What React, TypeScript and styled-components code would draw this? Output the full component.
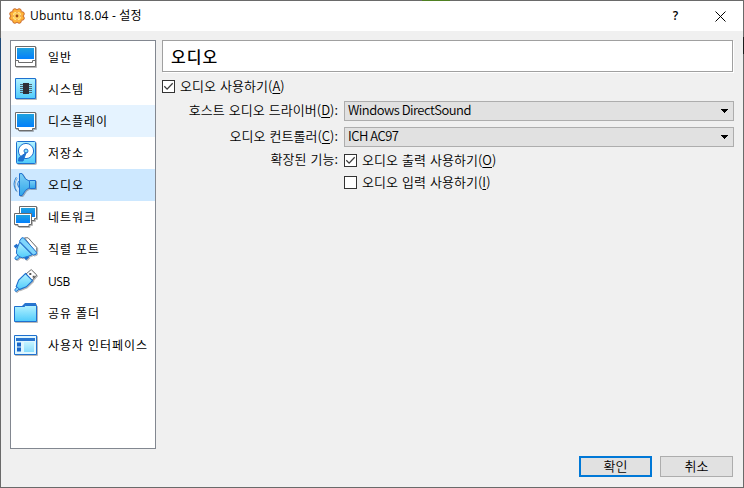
import React from "react";
import styled, { createGlobalStyle } from "styled-components";

const GlobalStyle = createGlobalStyle`
  * { box-sizing: border-box; }
  body { margin: 0; background: #f0f0f0; overflow: hidden; }
`;

const uiFont = `"Open Sans", "Noto Sans CJK KR", sans-serif`;
const formFont = `"Noto Sans CJK KR", sans-serif`;

const Frame = styled.div`
  width: 744px;
  height: 488px;
  padding: 1px;
  background:
    linear-gradient(#4f8022, #4f8022) 422px 0 / 28px 1px no-repeat,
    linear-gradient(#1f4a78, #1f4a78) 0 38px / 1px 52px no-repeat,
    linear-gradient(#1c1c1c, #1c1c1c) 743px 37px / 1px 17px no-repeat,
    #6a6a6a;
  color: #000;
  font-size: 13px;
`;

const Window = styled.div`
  width: 742px;
  height: 486px;
  display: flex;
  flex-direction: column;
  background: #f0f0f0;
`;

const TitleBar = styled.header`
  height: 30px;
  flex: none;
  display: flex;
  align-items: center;
  padding-left: 8px;
  background: #fff;
`;

const TitleText = styled.span`
  flex: 1;
  margin-left: 5px;
  font: 12px/28px ${uiFont};
  letter-spacing: 0.2px;
`;

const TitleButton = styled.button`
  width: 45px;
  height: 29px;
  padding: 0;
  border: 0;
  background: none;
  display: flex;
  align-items: center;
  justify-content: center;
  font: 600 12px/28px "Open Sans", sans-serif;
  color: #000;
`;

const Body = styled.div`
  height: 409px;
  margin: 9px 9px 0 9px;
  display: flex;
  gap: 6px;
`;

const Sidebar = styled.nav`
  width: 146px;
  flex: none;
  background: #fff;
  border: 1px solid #828790;
`;

const NavItem = styled.div<{ $state?: "hover" | "selected" }>`
  height: 32px;
  padding-left: 3px;
  display: flex;
  align-items: center;
  gap: 10px;
  background: ${(p) =>
    p.$state === "selected" ? "#cde8ff" : p.$state === "hover" ? "#e5f3ff" : "transparent"};
`;

const NavLabel = styled.span<{ $spacing?: number }>`
  padding-top: 2px;
  font: 12px/30px ${uiFont};
  letter-spacing: ${(p) => p.$spacing ?? 0.95}px;
  white-space: nowrap;
`;

const Page = styled.main`
  width: 572px;
  display: flex;
  flex-direction: column;
`;

const PageTitle = styled.h1`
  height: 32px;
  width: 571px;
  margin: 0;
  padding-left: 8px;
  border: 1px solid #a0a0a0;
  box-shadow: 1px 1px 0 #fff;
  background: #fff;
  font: 500 16px/30px "Noto Sans CJK KR", sans-serif;
  letter-spacing: 1px;
`;

const EnableRow = styled.div`
  height: 13px;
  margin-top: 8px;
`;

const CheckLabel = styled.label`
  height: 13px;
  display: flex;
  align-items: center;
  gap: 5px;
`;

const Box = styled.span`
  width: 13px;
  height: 13px;
  flex: none;
  display: flex;
  background: #fff;
  border: 1px solid #333;
`;

const Caption = styled.span<{ $latin?: boolean }>`
  padding-bottom: 2px;
  font: 350 13px/18px ${formFont};
  letter-spacing: ${(p) => (p.$latin ? -0.5 : 0.05)}px;
  word-spacing: ${(p) => (p.$latin ? 0 : 1)}px;
  white-space: nowrap;
`;

const Key = styled.span`
  text-decoration: underline;
  text-decoration-thickness: 1px;
  text-underline-offset: 2px;
`;

const Form = styled.div`
  margin-top: 8px;
  display: grid;
  grid-template-columns: 176px 390px;
  grid-template-rows: 20px 20px 13px 13px;
  row-gap: 6px;
  column-gap: 6px;
`;

const FieldLabel = styled.div`
  display: flex;
  align-items: center;
  justify-content: flex-end;
`;

const CheckCell = styled.div<{ $offset: number }>`
  grid-column: 2;
  padding-top: ${(p) => p.$offset}px;
`;

const Combo = styled.div`
  height: 20px;
  padding: 0 4px 0 3px;
  border: 1px solid #adadad;
  background: #e1e1e1;
  display: flex;
  align-items: center;
  justify-content: space-between;
`;

const Footer = styled.footer`
  display: flex;
  justify-content: flex-end;
  gap: 8px;
  padding: 7px 10px 0 0;
`;

const PushButton = styled.button<{ $primary?: boolean }>`
  width: 73px;
  height: 21px;
  padding: 0;
  background: #e1e1e1;
  border: ${(p) => (p.$primary ? "2px solid #0078d7" : "1px solid #adadad")};
  color: #000;
  display: flex;
  align-items: center;
  justify-content: center;
`;

const HiddenDefs = styled.svg`
  display: block;
`;

const BLUE = "#1e70cf";

function IconDefs() {
  return (
    <HiddenDefs width="0" height="0">
      <defs>
        <linearGradient id="screen" x1="0" y1="0" x2="0" y2="1">
          <stop offset="0" stopColor="#1fa2e0" />
          <stop offset="1" stopColor="#0480fb" />
        </linearGradient>
        <linearGradient id="sky" x1="0" y1="0" x2="0" y2="1">
          <stop offset="0" stopColor="#b4f2ff" />
          <stop offset="1" stopColor="#4fcbfb" />
        </linearGradient>
        <linearGradient id="cone" x1="0" y1="0" x2="0" y2="1">
          <stop offset="0" stopColor="#7fd0f6" />
          <stop offset="1" stopColor="#2fa6ea" />
        </linearGradient>
      </defs>
    </HiddenDefs>
  );
}

const IconSvg = styled.svg`
  width: 24px;
  height: 24px;
  flex: none;
  display: block;
  overflow: visible;
  filter: drop-shadow(1px 1px 0 rgba(0, 0, 0, 0.28));
`;

const icons: Record<string, React.ReactNode> = {
  general: (
    <>
      <path d="M1.5 1.5h20v20h-20z" fill="#fff" stroke="#6c6c6c" />
      <path d="M3 3h17v11h-17z" fill="url(#screen)" />
      <path d="M1.5 15.5h3v2h14v-2h3" fill="none" stroke="#6c6c6c" />
    </>
  ),
  system: (
    <>
      <path d="M1.5 1.5h20v20h-20z" fill="url(#sky)" stroke={BLUE} />
      <path d="M6 7.5h12M6 9.5h12M6 11.5h12M6 13.5h12M6 15.5h12" stroke="#4d6674" />
      <path d="M9 6h6v11h-6z" fill="#2e2e36" />
    </>
  ),
  display: (
    <>
      <path d="M1.5 3.5h20v16h-3v2h-14v-2h-3z" fill="#fff" stroke="#6c6c6c" />
      <path d="M3 5h17v13h-17z" fill="url(#screen)" />
    </>
  ),
  storage: (
    <>
      <rect x="2.5" y=".5" width="19" height="22" rx="1" fill="url(#sky)" stroke={BLUE} />
      <circle cx="12" cy="10" r="7.6" fill="#fff" stroke={BLUE} />
      <circle cx="12" cy="10" r="2" fill="#8de0fb" stroke={BLUE} />
      <path d="M12.2 11.5L9 20H4.5l.5-3.2z" fill={BLUE} stroke={BLUE} strokeLinejoin="round" />
    </>
  ),
  audio: (
    <>
      <path d="M2.3 4.2Q-2.3 11 2.3 18.2M4.8 8Q2.3 11 4.8 14.6" fill="none" stroke="#2c86d8" />
      <path d="M15.5 7.5h6v8h-6z" fill="url(#cone)" stroke={BLUE} />
      <path d="M5.5.6h2.6l3.4 5.3 4 2.3v6.4l-4 2.7-3.4 5.2H5.5z" fill="url(#cone)" stroke={BLUE} />
    </>
  ),
  network: (
    <>
      <path d="M5.5 1.5h17v12h-2v2h-15z" fill="#fff" stroke="#6c6c6c" />
      <path d="M7 3h14v9h-14z" fill="url(#screen)" />
      <path d="M.5 8.5h17v11h-2.5v2h-11v-2H.5z" fill="#fff" stroke="#6c6c6c" />
      <path d="M2 10h14v8h-14z" fill="url(#screen)" />
    </>
  ),
  serial: (
    <>
      <path d="M10.5.8h3.6l8.6 9.6v3.2l-1.2 1.6z" fill="#fff" stroke="#777" />
      <path d="M.6 10.2l3-2.4M11 22l3.2-2.6" stroke={BLUE} strokeWidth="3" />
      <path d="M4.6 17.2L.8 20.8l.8 1.7 1.8-.3 3.2-3" fill="#83dcff" stroke={BLUE} />
      <path d="M5.6 5.2L18 17.8l-4.4 1.7-5 1.3-3.6-1.1-2.6-3.4.3-3.8z" fill="url(#sky)" stroke={BLUE} />
      <path d="M7.8.8h1.7l13 14.4-.4 2-2.8.9L5.4 4.2z" fill="#7fd6fc" stroke={BLUE} />
    </>
  ),
  usb: (
    <>
      <path d="M12 5L17.2.6 22.7 6 18 11.4z" fill="#fff" stroke="#6c6c6c" />
      <path d="M15.3 4h2v2h-2zM18.7 6.8h2v2h-2z" fill="#555" />
      <path d="M11.5 4.5l7 7.2-6.2 6.1-6.8 2.8L2.2 17.5 4.7 11z" fill="url(#sky)" stroke={BLUE} strokeWidth="1.1" />
      <path d="M2.7 18.4L.7 21l1.2 1.7 3.2-2.5" fill="#7fd7fb" stroke={BLUE} />
    </>
  ),
  folder: (
    <>
      <path d="M8 5l3-3h11v5H8z" fill="#2875cf" />
      <path d="M.5 5.5h10l1-1h11v16H.5z" fill="url(#sky)" stroke={BLUE} />
    </>
  ),
  interface: (
    <>
      <path d="M.5 2.5h22v19H.5z" fill="#dff7ff" stroke={BLUE} />
      <path d="M2 5h19v3H2z" fill="#2875cf" />
      <path d="M3 9.5h4v4H3zM3 14.5h4v4H3z" fill="#1765c8" />
      <path d="M10 9h10v10H10z" fill="url(#sky)" opacity=".6" />
    </>
  ),
};

const TEETH = [22.5, 67.5, 112.5, 157.5, 202.5, 247.5, 292.5, 337.5].map((deg) => ({
  cx: 8 + 5.6 * Math.cos((deg * Math.PI) / 180),
  cy: 8 + 5.6 * Math.sin((deg * Math.PI) / 180),
}));

function GearIcon() {
  return (
    <svg width="16" height="16" viewBox="0 0 16 16">
      {TEETH.map((t, i) => (
        <circle key={i} {...t} r="2.1" fill="#ffb43a" stroke="#c25a1c" strokeWidth=".9" />
      ))}
      <circle cx="8" cy="8" r="5.9" fill="#ffb43a" />
      <circle cx="8" cy="8" r="4" fill="#ffcf5c" stroke="#ffe79c" strokeWidth=".8" />
      <path d="M8 3.6v1.2M8 11.2v1.2M3.6 8h1.2M11.2 8h1.2" stroke="#d9731e" />
      <circle cx="8" cy="8" r="1.4" fill="#9c4414" />
    </svg>
  );
}

const CheckMark = () => (
  <svg width="11" height="11" viewBox="0 0 11 11">
    <path d="M1.3 5.3l2.8 2.8 5.6-5.8" fill="none" stroke="#3c3c3c" strokeWidth="1.3" />
  </svg>
);

const Arrow = () => (
  <svg width="9" height="4" viewBox="0 0 9 4">
    <path d="M1 0h7v1H1zM2 1h5v1H2zM3 2h3v1H3zM4 3h1v1H4z" fill="#000" shapeRendering="crispEdges" />
  </svg>
);

const navItems: { icon: string; label: string; state?: "hover" | "selected"; spacing?: number }[] = [
  { icon: "general", label: "일반" },
  { icon: "system", label: "시스템" },
  { icon: "display", label: "디스플레이", state: "hover" },
  { icon: "storage", label: "저장소" },
  { icon: "audio", label: "오디오", state: "selected" },
  { icon: "network", label: "네트워크" },
  { icon: "serial", label: "직렬 포트" },
  { icon: "usb", label: "USB", spacing: -0.4 },
  { icon: "folder", label: "공유 폴더" },
  { icon: "interface", label: "사용자 인터페이스" },
];

function Check({ text, k, checked }: { text: string; k: string; checked?: boolean }) {
  return (
    <CheckLabel>
      <Box>{checked && <CheckMark />}</Box>
      <Caption>
        {text}(<Key>{k}</Key>)
      </Caption>
    </CheckLabel>
  );
}

export default function App() {
  return (
    <Frame>
      <GlobalStyle />
      <Window>
        <IconDefs />
        <TitleBar>
          <GearIcon />
          <TitleText>Ubuntu 18.04 - 설정</TitleText>
          <TitleButton>?</TitleButton>
          <TitleButton>
            <svg width="11" height="11" viewBox="0 0 11 11">
              <path d="M.5.5l10 10M10.5.5l-10 10" stroke="#000" strokeWidth="1" />
            </svg>
          </TitleButton>
        </TitleBar>
        <Body>
          <Sidebar>
            {navItems.map((n) => (
              <NavItem key={n.icon} $state={n.state}>
                <IconSvg viewBox="0 0 24 24">{icons[n.icon]}</IconSvg>
                <NavLabel $spacing={n.spacing}>{n.label}</NavLabel>
              </NavItem>
            ))}
          </Sidebar>
          <Page>
            <PageTitle>오디오</PageTitle>
            <EnableRow>
              <Check text="오디오 사용하기" k="A" checked />
            </EnableRow>
            <Form>
              <FieldLabel>
                <Caption>
                  호스트 오디오 드라이버(<Key>D</Key>):
                </Caption>
              </FieldLabel>
              <Combo>
                <Caption $latin>Windows DirectSound</Caption>
                <Arrow />
              </Combo>
              <FieldLabel>
                <Caption>
                  오디오 컨트롤러(<Key>C</Key>):
                </Caption>
              </FieldLabel>
              <Combo>
                <Caption $latin>ICH AC97</Caption>
                <Arrow />
              </Combo>
              <FieldLabel>
                <Caption>확장된 기능:</Caption>
              </FieldLabel>
              <CheckCell $offset={1}>
                <Check text="오디오 출력 사용하기" k="O" checked />
              </CheckCell>
              <CheckCell $offset={4}>
                <Check text="오디오 입력 사용하기" k="I" />
              </CheckCell>
            </Form>
          </Page>
        </Body>
        <Footer>
          <PushButton $primary>
            <Caption>확인</Caption>
          </PushButton>
          <PushButton>
            <Caption>취소</Caption>
          </PushButton>
        </Footer>
      </Window>
    </Frame>
  );
}
